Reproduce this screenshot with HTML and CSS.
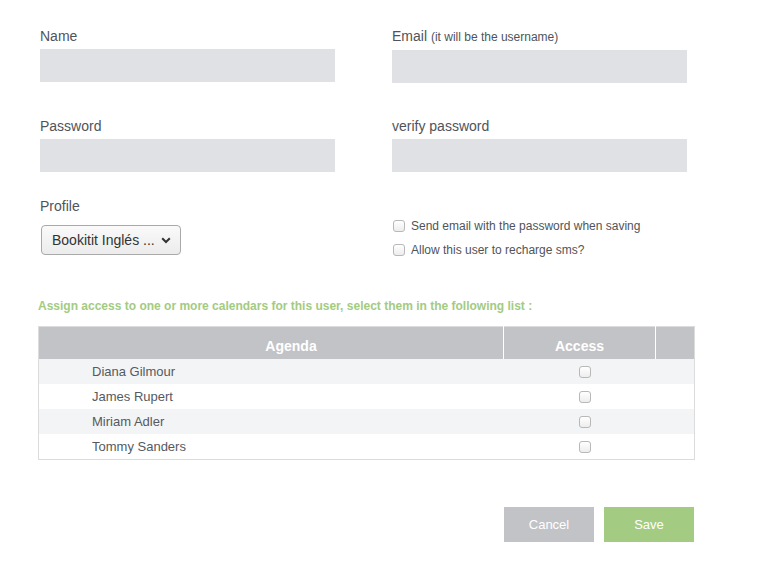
FILE: index.html
```html
<!DOCTYPE html>
<html lang="en">
<head>
    <meta charset="UTF-8">
    <title>New user</title>
    <link rel="stylesheet" href="styles.css">
</head>
<body>
    <div class="user-form">
        <!-- Account fields -->
        <div class="fields">
            <div class="field">
                <label>Name</label>
                <input type="text" class="text-input">
            </div>
            <div class="field">
                <label>Email <small>(it will be the username)</small></label>
                <input type="text" class="text-input">
            </div>
            <div class="field">
                <label>Password</label>
                <input type="password" class="text-input">
            </div>
            <div class="field">
                <label>verify password</label>
                <input type="password" class="text-input">
            </div>
            <div class="field field-last">
                <label>Profile</label>
                <div class="select-box">
                    <span>Bookitit Inglés ...</span>
                    <svg width="10" height="7" viewBox="0 0 10 7"><path d="M1.2 1.2 L5 5 L8.8 1.2" fill="none" stroke="#333" stroke-width="2"/></svg>
                </div>
            </div>
            <div class="field field-last options">
                <label class="check"><input type="checkbox"> Send email with the password when saving</label>
                <label class="check"><input type="checkbox"> Allow this user to recharge sms?</label>
            </div>
        </div>

        <!-- Calendar access -->
        <p class="hint">Assign access to one or more calendars for this user, select them in the following list :</p>
        <table class="agenda-table">
            <thead>
                <tr>
                    <th class="col-agenda">Agenda</th>
                    <th class="col-access">Access</th>
                    <th class="col-extra"></th>
                </tr>
            </thead>
            <tbody>
                <tr><td class="name">Diana Gilmour</td><td class="access"><input type="checkbox"></td><td></td></tr>
                <tr><td class="name">James Rupert</td><td class="access"><input type="checkbox"></td><td></td></tr>
                <tr><td class="name">Miriam Adler</td><td class="access"><input type="checkbox"></td><td></td></tr>
                <tr><td class="name">Tommy Sanders</td><td class="access"><input type="checkbox"></td><td></td></tr>
            </tbody>
        </table>

        <div class="actions">
            <button class="btn btn-cancel">Cancel</button>
            <button class="btn btn-save">Save</button>
        </div>
    </div>
</body>
</html>
```

FILE: styles.css
```css
/* General */
body {
    margin: 0;
    background: #ffffff;
    font-family: "Liberation Sans", Arial, sans-serif;
    color: #4f545a;
}

.user-form {
    width: 657px;
    padding: 28px 0 0 38px;
}

/* Account fields */
.fields {
    display: grid;
    grid-template-columns: 295px 295px;
    column-gap: 57px;
    align-items: start;
    padding-left: 2px;
}

.field {
    display: flex;
    flex-direction: column;
    margin-bottom: 35px;
}

.field:nth-child(3), .field:nth-child(4) {
    margin-bottom: 26px;
}

.field-last {
    margin-bottom: 0;
}

.field label {
    font-size: 14px;
    line-height: 16px;
    margin-bottom: 5px;
}

.field label small {
    font-size: 12px;
}

.text-input {
    height: 33px;
    border: none;
    background: #dfe1e4;
    box-sizing: border-box;
    outline: none;
}

.select-box {
    margin-top: 6px;
    margin-left: 1px;
    width: 140px;
    height: 30px;
    box-sizing: border-box;
    display: flex;
    align-items: center;
    gap: 6px;
    padding: 0 0 0 10px;
    border: 1px solid #a9a9a9;
    border-radius: 4px;
    background: linear-gradient(#fafafa, #ececec);
    font-size: 14px;
    color: #333;
    white-space: nowrap;
}

.options {
    padding-top: 22px;
    gap: 12px;
}

.options .check {
    display: flex;
    align-items: center;
    font-size: 12px;
    line-height: 12px;
    margin: 0 0 0 1px;
    color: #4f545a;
}

input[type="checkbox"] {
    appearance: none;
    width: 12px;
    height: 12px;
    margin: 0 6px 0 0;
    border: 1px solid #b8b8b8;
    border-radius: 3px;
    background: linear-gradient(#ffffff, #ededed);
}

/* Calendar access */
.hint {
    margin: 42px 0 12px;
    font-weight: bold;
    font-size: 12px;
    line-height: 16px;
    color: #a3cb82;
}

.agenda-table {
    width: 657px;
    border-collapse: collapse;
    border: 1px solid #dcdcdc;
    font-size: 13px;
}

.agenda-table th {
    height: 32px;
    padding: 6px 0 0;
    box-sizing: border-box;
    background: #c2c3c7;
    color: #ffffff;
    font-size: 14px;
    border-left: 1px solid #ffffff;
}

.agenda-table th:first-child {
    border-left: none;
}

.agenda-table th.col-agenda {
    width: 465px;
    padding-left: 40px;
}

.col-access { width: 152px; }

.agenda-table td {
    height: 25px;
    padding: 0;
}

.agenda-table tbody tr:nth-child(odd) {
    background: #f3f4f5;
}

.agenda-table td.name {
    padding-left: 53px;
    color: #555a60;
}

.agenda-table td.access {
    text-align: center;
    padding-left: 10px;
}

.agenda-table td.access input {
    margin: 0;
    vertical-align: middle;
}

/* Buttons */
.actions {
    display: flex;
    justify-content: flex-end;
    gap: 10px;
    margin-top: 47px;
    padding-right: 1px;
}

.btn {
    width: 90px;
    height: 35px;
    border: none;
    font-family: "Liberation Sans", Arial, sans-serif;
    font-size: 13px;
    color: #ffffff;
    cursor: pointer;
}

.btn-cancel {
    background: #c2c3c7;
}

.btn-save {
    background: #a3cb82;
}
```
